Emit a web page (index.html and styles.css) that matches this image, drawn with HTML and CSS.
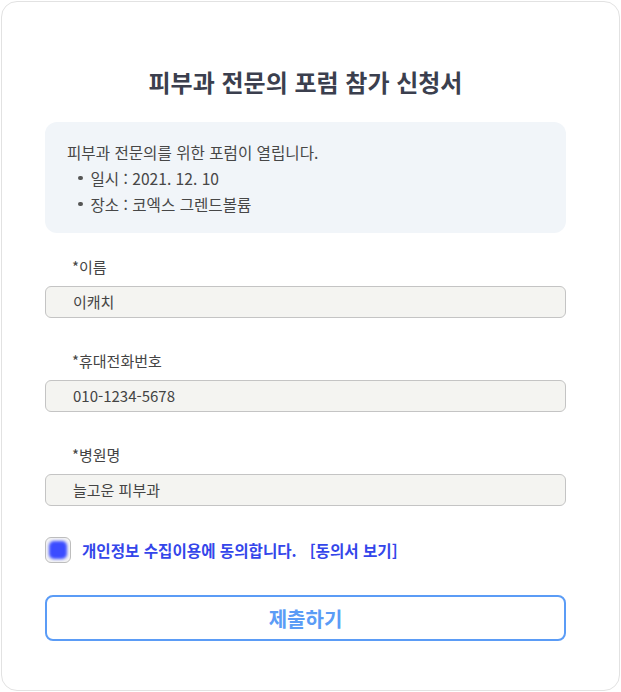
FILE: index.html
```html
<!DOCTYPE html>
<html lang="ko">
<head>
<meta charset="utf-8">
<link rel="stylesheet" href="styles.css">
</head>
<body>
<div class="card">
  <h1 class="title">피부과 전문의 포럼 참가 신청서</h1>
  <div class="info">
    <p class="info-lead">피부과 전문의를 위한 포럼이 열립니다.</p>
    <ul class="info-list">
      <li>일시 : 2021. 12. 10</li>
      <li>장소 : 코엑스 그렌드볼륨</li>
    </ul>
  </div>
  <div class="field">
    <label class="label">*이름</label>
    <div class="input">이캐치</div>
  </div>
  <div class="field">
    <label class="label">*휴대전화번호</label>
    <div class="input">010-1234-5678</div>
  </div>
  <div class="field">
    <label class="label">*병원명</label>
    <div class="input">늘고운 피부과</div>
  </div>
  <div class="agree">
    <span class="check"><span class="check-fill"></span></span>
    <span class="agree-text">개인정보 수집이용에 동의합니다.</span>
    <span class="agree-link">[동의서 보기]</span>
  </div>
  <button class="submit">제출하기</button>
</div>
</body>
</html>
```

FILE: styles.css
```css
html, body {
  margin: 0;
  padding: 0;
  background: #ffffff;
}
body {
  font-family: "Noto Sans CJK KR", "Noto Sans", sans-serif;
  color: #444;
}
.card {
  box-sizing: border-box;
  margin: 1px;
  width: 619px;
  height: 690px;
  border: 1.5px solid #e2e2e2;
  border-radius: 16px;
  padding: 0 53px 0 43px;
  display: flex;
  flex-direction: column;
}
.title {
  margin: 62px 0 22px;
  text-align: center;
  font-size: 24px;
  line-height: 36px;
  font-weight: 700;
  color: #3b3f4e;
}
.info {
  background: #f1f5f9;
  border-radius: 12px;
  padding: 17px 22px 16px;
  font-size: 15.6px;
  line-height: 26px;
  color: #474747;
}
.info-lead {
  margin: 0;
}
.info-list {
  margin: 0;
  padding: 0;
  list-style: none;
}
.info-list li {
  display: flex;
  align-items: center;
}
.info-list li::before {
  content: "";
  width: 4.5px;
  height: 4.5px;
  border-radius: 50%;
  background: #555;
  margin: 0 8px 0 11px;
}
.field {
  display: flex;
  flex-direction: column;
}
.label {
  margin-top: 22px;
  padding-left: 27px;
  font-size: 15px;
  line-height: 24px;
  color: #444;
}
.input {
  box-sizing: border-box;
  margin-top: 7px;
  height: 32px;
  background: #f4f4f1;
  border: 1px solid #c4c4c4;
  border-radius: 6px;
  padding-left: 27px;
  font-size: 15px;
  line-height: 30px;
  color: #444;
}
.field + .field .label {
  margin-top: 31px;
}
.agree {
  margin-top: 31px;
  display: flex;
  align-items: center;
  gap: 11px;
  font-size: 15.6px;
  font-weight: 700;
  color: #3446ea;
}
.check {
  box-sizing: border-box;
  width: 26px;
  height: 26px;
  border: 1px solid #bdbdbd;
  border-radius: 6px;
  background: #f4f4f4;
  display: flex;
  align-items: center;
  justify-content: center;
}
.check-fill {
  width: 18px;
  height: 18px;
  border-radius: 5px;
  background: #3b4cff;
  filter: blur(1.5px);
}
.agree-link {
  margin-left: 2px;
}
.submit {
  margin-top: 32px;
  box-sizing: border-box;
  height: 46px;
  width: 100%;
  background: #fff;
  border: 2px solid #5b9cf6;
  border-radius: 8px;
  font-family: inherit;
  font-size: 20px;
  font-weight: 700;
  color: #5b9cf6;
  cursor: pointer;
}
```
